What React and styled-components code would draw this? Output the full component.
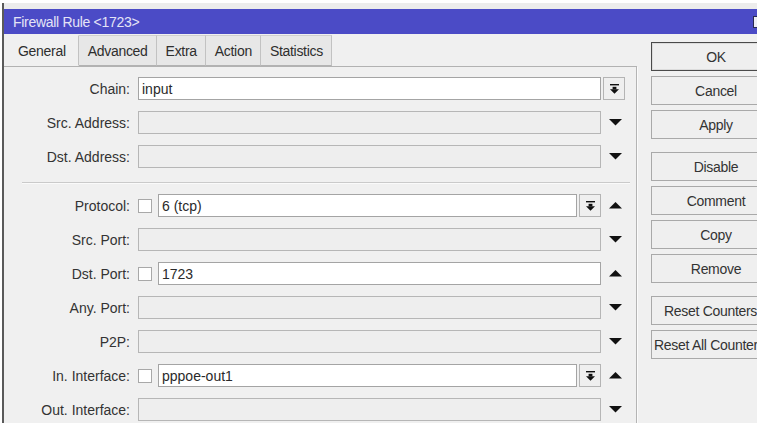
import React from "react";
import styled, { createGlobalStyle } from "styled-components";

const Global = createGlobalStyle`
  html, body { margin: 0; padding: 0; background: #ffffff; overflow: hidden; }
  body { font-family: "Liberation Sans", Arial, sans-serif; }
`;

const Page = styled.div`
  width: 764px;
  height: 423px;
  overflow: hidden;
  background: #ffffff;
`;

const Window = styled.div`
  margin: 3px 0 0 2px;
  width: 753px;
  height: 420px;
  border-left: 2px solid #5a5a5a;
  background: #f0f0f0;
  overflow: hidden;
  display: flex;
  flex-direction: column;
  font-size: 14px;
  letter-spacing: -0.3px;
  color: #363636;
`;

const TopStrip = styled.div`
  height: 6px;
  background: #ececec;
  flex: none;
`;

const TitleBar = styled.div`
  flex: none;
  height: 25px;
  background: #4b4bc6;
  color: #e4e4f6;
  display: flex;
  align-items: center;
  justify-content: space-between;
  padding-left: 9px;
`;

const CloseBox = styled.div`
  width: 9px;
  height: 10px;
  border: 1px solid #2a2a50;
  background: #ededf5;
  margin-right: -7px;
`;

const Body = styled.div`
  flex: 1;
  display: flex;
  margin-top: 1px;
  min-height: 0;
`;

const LeftPanel = styled.div`
  width: 633px;
  flex: none;
  display: flex;
  flex-direction: column;
`;

const TabBar = styled.div`
  display: flex;
  height: 31px;
  border-bottom: 1px solid #b2b2b2;
  flex: none;
`;

const Tab = styled.div`
  height: 31px;
  box-sizing: border-box;
  display: flex;
  align-items: center;
  padding: ${(p) => (p.$active ? "0 12px 0 14px" : "0 8px 0 9px")};
  background: ${(p) => (p.$active ? "#f0f0f0" : "#e7e7e7")};
  border-right: 1px solid #c2c2c2;
  border-top: 1px solid ${(p) => (p.$active ? "#f0f0f0" : "#cfcfcf")};
  border-bottom: 1px solid ${(p) => (p.$active ? "#f0f0f0" : "#b2b2b2")};
  margin-bottom: -1px;
  color: #2e2e2e;
`;

const Form = styled.div`
  flex: 1;
  border-right: 1px solid #b4b4b4;
  box-shadow: 1px 0 0 #fbfbfb;
  padding-top: 10px;
  display: flex;
  flex-direction: column;
  gap: 11px;
`;

const Row = styled.div`
  display: flex;
  align-items: center;
  height: 23px;
  flex: none;
`;

const Label = styled.div`
  width: 126px;
  margin-right: 8px;
  text-align: right;
  white-space: nowrap;
  letter-spacing: 0;
  color: #333;
`;

const Field = styled.div`
  width: 463px;
  display: flex;
  align-items: center;
  gap: 6px;
  height: 23px;
`;

const InputWrap = styled.div`
  flex: 1;
  display: flex;
  gap: 2px;
  height: 23px;
`;

const Input = styled.div`
  flex: 1;
  height: 23px;
  box-sizing: border-box;
  border: 1px solid ${(p) => (p.$disabled ? "#b6b6b6" : "#a4a4a4")};
  background: ${(p) => (p.$disabled ? "#eeeeee" : "#ffffff")};
  display: flex;
  align-items: center;
  padding-left: 3px;
  color: #2a2a2a;
  white-space: nowrap;
  letter-spacing: 0;
`;

const Check = styled.div`
  width: 14px;
  height: 14px;
  box-sizing: border-box;
  border: 1px solid #a8a8a8;
  background: #ffffff;
  flex: none;
`;

const ComboBtn = styled.div`
  width: 22px;
  height: 23px;
  box-sizing: border-box;
  border: 1px solid #b4b4b4;
  background: #efefef;
  display: flex;
  align-items: center;
  justify-content: center;
  flex: none;
`;

const Side = styled.div`
  width: 24px;
  margin-left: 2px;
  display: flex;
  align-items: center;
  justify-content: ${(p) => (p.$btn ? "flex-start" : "center")};
  height: 23px;
`;

const Separator = styled.div`
  height: 1px;
  background: #cacaca;
  box-shadow: 0 1px 0 #fafafa;
  margin: 3px 6px 0 18px;
  flex: none;
`;

const ButtonCol = styled.div`
  flex: 1;
  padding: 7px 0 0 14px;
  display: flex;
  flex-direction: column;
`;

const Button = styled.div`
  width: 130px;
  height: 29px;
  box-sizing: border-box;
  flex: none;
  border: 1px solid ${(p) => (p.$default ? "#4a4a4a" : "#a9a9a9")};
  box-shadow: ${(p) => (p.$default ? "inset 0 0 0 1px #dcdcdc" : "none")};
  background: #efefef;
  display: flex;
  align-items: center;
  justify-content: ${(p) => (p.$indent != null ? "flex-start" : "center")};
  padding-left: ${(p) => (p.$indent != null ? `${p.$indent}px` : "0")};
  white-space: nowrap;
  overflow: hidden;
  color: #333;
  margin-top: ${(p) => (p.$groupStart ? "13px" : "5px")};
  &:first-child { margin-top: 0; }
`;

const DownTri = () => (
  <svg width="13" height="7" viewBox="0 0 13 7">
    <polygon points="0,0 13,0 6.5,6.5" fill="#111" />
  </svg>
);

const UpTri = () => (
  <svg width="13" height="7" viewBox="0 0 13 7">
    <polygon points="0,6.5 13,6.5 6.5,0" fill="#111" />
  </svg>
);

const ComboIcon = () => (
  <svg width="9" height="10" viewBox="0 0 9 10">
    <rect x="0" y="0" width="9" height="1.4" fill="#111" />
    <rect x="2.6" y="2.8" width="3.8" height="2.6" fill="#111" />
    <polygon points="0,5.2 9,5.2 4.5,9.8" fill="#111" />
  </svg>
);

const FormRow = ({ label, value, check, disabled, combo, side }) => (
  <Row>
    <Label>{label}</Label>
    <Field>
      {check && <Check />}
      <InputWrap>
        <Input $disabled={disabled}>{value}</Input>
        {combo && (
          <ComboBtn>
            <ComboIcon />
          </ComboBtn>
        )}
      </InputWrap>
    </Field>
    <Side $btn={side === "combo"}>
      {side === "combo" && (
        <ComboBtn>
          <ComboIcon />
        </ComboBtn>
      )}
      {side === "down" && <DownTri />}
      {side === "up" && <UpTri />}
    </Side>
  </Row>
);

export default function App() {
  const tabs = ["General", "Advanced", "Extra", "Action", "Statistics"];
  const buttons = [
    { t: "OK", d: true },
    { t: "Cancel" },
    { t: "Apply" },
    { t: "Disable", g: true },
    { t: "Comment" },
    { t: "Copy" },
    { t: "Remove" },
    { t: "Reset Counters", g: true, i: 12 },
    { t: "Reset All Counters", i: 2 },
  ];
  return (
    <Page>
      <Global />
      <Window>
        <TopStrip />
        <TitleBar>
          <span>Firewall Rule &lt;1723&gt;</span>
          <CloseBox />
        </TitleBar>
        <Body>
          <LeftPanel>
            <TabBar>
              {tabs.map((t, i) => (
                <Tab key={t} $active={i === 0}>
                  {t}
                </Tab>
              ))}
            </TabBar>
            <Form>
              <FormRow label="Chain:" value="input" side="combo" />
              <FormRow label="Src. Address:" disabled side="down" />
              <FormRow label="Dst. Address:" disabled side="down" />
              <Separator />
              <FormRow label="Protocol:" value="6 (tcp)" check combo side="up" />
              <FormRow label="Src. Port:" disabled side="down" />
              <FormRow label="Dst. Port:" value="1723" check side="up" />
              <FormRow label="Any. Port:" disabled side="down" />
              <FormRow label="P2P:" disabled side="down" />
              <FormRow label="In. Interface:" value="pppoe-out1" check combo side="up" />
              <FormRow label="Out. Interface:" disabled side="down" />
            </Form>
          </LeftPanel>
          <ButtonCol>
            {buttons.map((b) => (
              <Button key={b.t} $default={b.d} $groupStart={b.g} $indent={b.i}>
                {b.t}
              </Button>
            ))}
          </ButtonCol>
        </Body>
      </Window>
    </Page>
  );
}
